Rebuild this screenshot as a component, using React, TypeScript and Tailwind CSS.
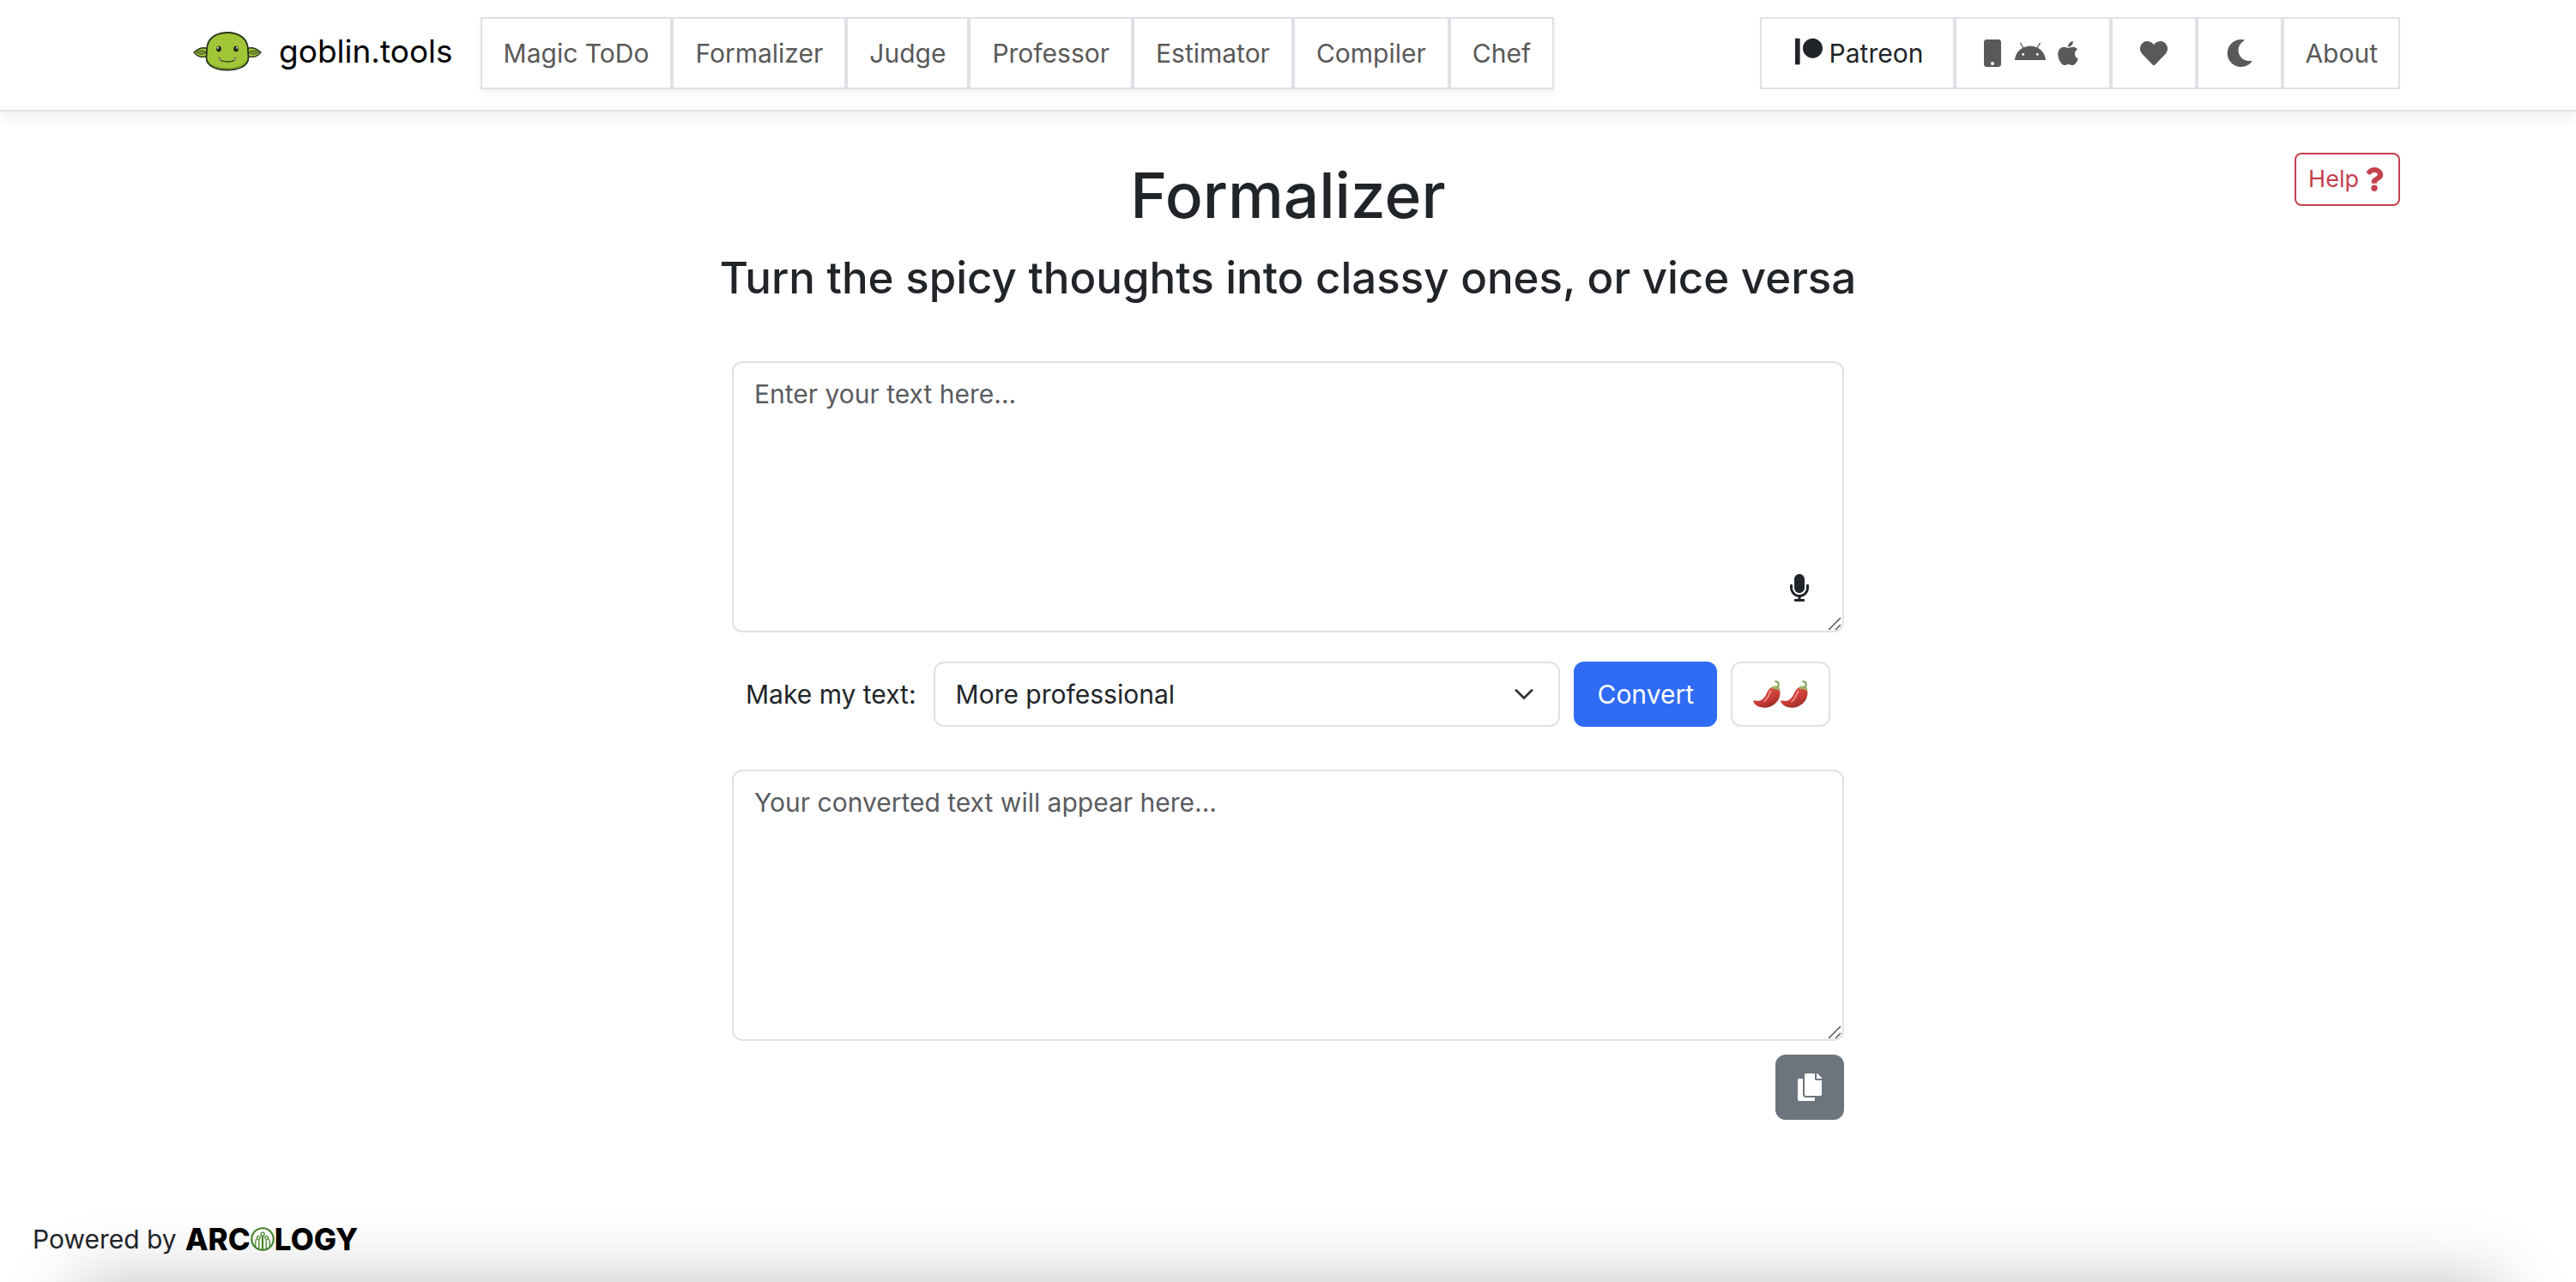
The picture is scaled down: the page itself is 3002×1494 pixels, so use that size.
import React, { useState } from "react";
import type { ReactNode } from "react";
import {
  FaAndroid,
  FaApple,
  FaCopy,
  FaHeart,
  FaMicrophone,
  FaMobile,
  FaMoon,
  FaPatreon,
  FaQuestion,
} from "react-icons/fa";

const tools = ["Magic ToDo", "Formalizer", "Judge", "Professor", "Estimator", "Compiler", "Chef"];

function GoblinLogo() {
  return (
    <svg viewBox="0 0 80 46" className="h-[46px] w-20" aria-hidden="true">
      <g stroke="#26331a" strokeWidth="1.4" strokeLinejoin="round">
        <path d="M17 20C12 17 7 19 1 24C5 29 11 31 17 28Z" fill="#a3c73a" />
        <path d="M63 20C68 17 73 19 79 24C75 29 69 31 63 28Z" fill="#a3c73a" />
        <path d="M15 24C11 21 8 22 4 24C8 27 11 27 15 24Z" fill="#7f9a35" strokeWidth="0.8" />
        <path d="M65 24C69 21 72 22 76 24C72 27 69 27 65 24Z" fill="#7f9a35" strokeWidth="0.8" />
        <path
          d="M40 1C55 1 64 9 64 21C64 24 64.500 27 64.500 30C64.500 40 53 44.500 40 44.500C27 44.500 15.500 40 15.500 30C15.500 27 16 24 16 21C16 9 25 1 40 1Z"
          fill="#a0c536"
          strokeWidth="1.8"
        />
      </g>
      <path d="M18 34C22 40 30 42 40 42C50 42 58 40 62 34C60 41 51 43.600 40 43.600C29 43.600 20 41 18 34Z" fill="#7f9f2b" />
      <g fill="#1b2416">
        <ellipse cx="30" cy="20" rx="2.800" ry="3.200" />
        <ellipse cx="50" cy="20" rx="2.800" ry="3.200" />
      </g>
      <circle cx="29" cy="18.800" r="1" fill="#fff" />
      <circle cx="51" cy="18.800" r="1" fill="#fff" />
      <path d="M31 32Q33 35 40 35Q47 35 49 32" fill="none" stroke="#26331a" strokeWidth="1.300" />
      <path d="M30.500 33V29.500L33.500 33.800ZM49.500 33V29.500L46.500 33.800Z" fill="#fff" stroke="#26331a" strokeWidth="0.600" />
    </svg>
  );
}

function Pepper() {
  return (
    <svg viewBox="0 0 32 32" className="size-8" aria-hidden="true">
      <defs>
        <linearGradient id="pepperSkin" x1="0.3" y1="0.1" x2="0.8" y2="1">
          <stop offset="0" stopColor="#dd5a50" />
          <stop offset="0.55" stopColor="#c93a35" />
          <stop offset="1" stopColor="#8a2c25" />
        </linearGradient>
      </defs>
      <path
        d="M18.500 10.500C20.500 7.500 24 6.800 27 8C31 9.500 32 13 31.300 17C30 25 23 31.500 13.500 31.800C7 32 1.500 28.500 0.300 24.600C0 23.200 1.200 22.900 2.600 23.400C10 25.500 13.500 20 15.500 15.500C16.400 13.400 17.200 12 18.500 10.500Z"
        fill="url(#pepperSkin)"
      />
      <path d="M20.500 12.500C18.500 15.500 18 21 13 24.500" fill="none" stroke="#f3a59a" strokeWidth="1.400" strokeLinecap="round" />
      <path d="M20.500 9C22 6.500 25 5.600 28 6.800C30.600 7.800 31.800 9.800 31.400 12.500C30 11.500 29.300 10.300 27.500 10.800C26.500 9.500 25 9.600 24 10.300C23 9 21.800 9 20.500 9Z" fill="#9fb86a" />
      <path d="M28.500 8C31 4.500 30 1.300 26 1.200" fill="none" stroke="#6f9a45" strokeWidth="1.800" strokeLinecap="round" />
    </svg>
  );
}

function ArcologyMark() {
  return (
    <svg viewBox="0 0 27 27" className="size-7" fill="none" stroke="#43872a" aria-hidden="true">
      <circle cx="13.500" cy="13.500" r="12.300" strokeWidth="2" />
      <g strokeWidth="1.200">
        <circle cx="13.500" cy="8" r="2" />
        <circle cx="9" cy="12" r="1.800" />
        <circle cx="18" cy="12" r="1.800" />
        <path d="M5.500 22V17Q5.500 14 7.500 13M21.500 22V17Q21.500 14 19.500 13M9.500 24V14M17.500 24V14" />
        <path d="M13.500 10V26" strokeWidth="2" />
      </g>
    </svg>
  );
}

function ResizeGrip() {
  return (
    <svg
      viewBox="0 0 16 16"
      className="pointer-events-none absolute right-[3px] bottom-[2px] size-4"
      stroke="#555"
      strokeWidth="1.500"
      aria-hidden="true"
    >
      <path d="M1 15L15 1M9 15L15 9" />
    </svg>
  );
}

function BarLink({ label, className, children }: { label?: string; className: string; children: ReactNode }) {
  return (
    <a
      href="#"
      aria-label={label}
      className={`flex h-[84px] items-center border-2 border-[#dee2e6] bg-white hover:bg-gray-50 ${className}`}
    >
      {children}
    </a>
  );
}

function IconSlot({ children }: { children: ReactNode }) {
  return <span className="flex w-10 justify-center">{children}</span>;
}

const areaStyle =
  "block h-[316px] w-full resize-none rounded-xl border-2 border-[#dee2e6] bg-white px-6 py-3 leading-[48px] placeholder:text-[#595c5f] focus:outline-none focus:border-[#86b7fe]";

export default function App() {
  const [tone, setTone] = useState("More professional");

  return (
    <div className="relative flex min-h-screen flex-col overflow-hidden bg-white font-['Inter',sans-serif] text-[30px] leading-[48px] text-[#212529]">
      <header className="border-b-2 border-[#dee2e6] bg-white pt-5 pb-6 shadow-[0_8px_16px_rgba(0,0,0,0.06)]">
        <div className="mx-auto flex max-w-[2640px] items-center px-6">
          <a href="#" className="mr-8 mb-1 ml-5 flex items-center gap-5 text-[37px] text-black">
            <GoblinLogo />
            goblin.tools
          </a>
          <nav aria-label="Tools" className="flex shadow-[0_4px_8px_rgba(0,0,0,0.06)]">
            {tools.map((name) => (
              <BarLink key={name} className="px-[25px] text-[#595959]">
                {name}
              </BarLink>
            ))}
          </nav>
          <nav aria-label="Site" className="ml-auto flex text-[#595959]">
            <BarLink className="gap-1 px-[35px] text-[#212529]">
              <IconSlot>
                <FaPatreon className="mb-1 size-8" />
              </IconSlot>
              Patreon
            </BarLink>
            <BarLink label="Mobile apps" className="gap-1 pr-7 pl-[22px]">
              <IconSlot>
                <FaMobile className="size-8" />
              </IconSlot>
              <IconSlot>
                <FaAndroid className="h-8 w-9" />
              </IconSlot>
              <IconSlot>
                <FaApple className="size-8" />
              </IconSlot>
            </BarLink>
            <BarLink label="Favourites" className="px-7">
              <IconSlot>
                <FaHeart className="size-8" />
              </IconSlot>
            </BarLink>
            <BarLink label="Dark mode" className="px-7">
              <IconSlot>
                <FaMoon className="size-8" />
              </IconSlot>
            </BarLink>
            <BarLink className="px-6">About</BarLink>
          </nav>
        </div>
      </header>

      <main className="mx-auto w-full max-w-[2640px] px-6 pt-12">
        <div className="grid grid-cols-[1fr_auto_1fr]">
          <h1 className="col-start-2 mt-0.5 text-[73px] leading-[96px] font-medium">Formalizer</h1>
          <button
            type="button"
            className="flex h-[62px] items-center gap-1 self-start justify-self-end rounded-lg border-2 border-[#c4414f] px-3.5 text-[27px] text-[#c4414f]"
          >
            Help
            <FaQuestion className="size-7" />
          </button>
        </div>
        <h2 className="mt-4 text-center text-[51px] leading-[64px] font-medium">
          Turn the spicy thoughts into classy ones, or vice versa
        </h2>

        <form className="mx-auto mt-[65px] max-w-[1296px]" onSubmit={(e) => e.preventDefault()}>
          <div className="relative">
            <textarea aria-label="Your text" placeholder="Enter your text here..." className={areaStyle} />
            <button type="button" aria-label="Dictate" className="absolute right-9 bottom-9">
              <FaMicrophone className="size-8" />
            </button>
            <ResizeGrip />
          </div>

          <div className="mt-[34px] flex h-[76px] items-center gap-4 px-4">
            <label htmlFor="tone" className="mr-1">
              Make my text:
            </label>
            <div className="relative h-full grow">
              <select
                id="tone"
                value={tone}
                onChange={(e) => setTone(e.target.value)}
                className="h-full w-full appearance-none rounded-xl border-2 border-[#dee2e6] bg-white px-6"
              >
                <option>More professional</option>
                <option>More polite</option>
                <option>More informal</option>
                <option>More sociable</option>
              </select>
              <svg
                viewBox="0 0 16 16"
                className="pointer-events-none absolute top-[26px] right-[30px] size-6"
                fill="none"
                stroke="#343a40"
                strokeWidth="2"
                strokeLinecap="round"
                strokeLinejoin="round"
                aria-hidden="true"
              >
                <path d="m2 5 6 6 6-6" />
              </svg>
            </div>
            <button type="submit" className="h-full rounded-xl bg-[#2f6bf5] px-[27px] text-white">
              Convert
            </button>
            <button
              type="button"
              aria-label="Spiciness"
              className="flex h-full items-center rounded-xl border-2 border-[#dee2e6] px-6"
            >
              <Pepper />
              <Pepper />
            </button>
          </div>

          <div className="relative mt-[50px]">
            <textarea
              aria-label="Converted text"
              placeholder="Your converted text will appear here..."
              className={areaStyle}
            />
            <ResizeGrip />
          </div>
          <button
            type="button"
            aria-label="Copy"
            className="mt-4 ml-auto flex h-[76px] w-20 items-center justify-center rounded-xl bg-[#6c757d] text-white"
          >
            <FaCopy className="size-8" />
          </button>
        </form>
      </main>

      <footer className="mt-auto flex items-center px-[38px] pb-[26px]">
        Powered by
        <a href="#" aria-label="Arcology" className="ml-2.5 flex items-center text-[35px] font-extrabold text-black">
          ARC
          <ArcologyMark />
          LOGY
        </a>
      </footer>
      <div className="pointer-events-none absolute inset-x-[90px] top-full h-24 shadow-[0_0_80px_rgba(0,0,0,0.25)]" />
    </div>
  );
}
